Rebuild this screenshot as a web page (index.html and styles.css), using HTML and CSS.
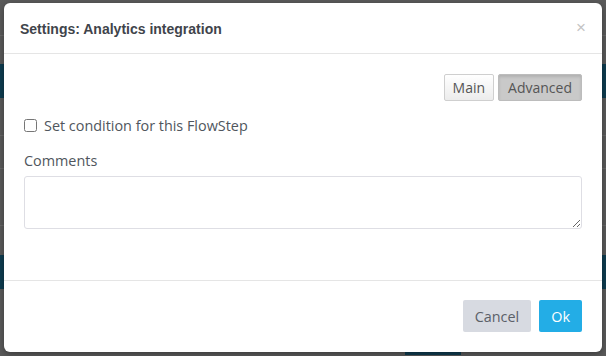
FILE: index.html
```html
<!DOCTYPE html>
<html lang="en">
<head>
	<meta charset="UTF-8">
	<title>Settings: Analytics integration</title>
	<link rel="stylesheet" href="styles.css">
</head>
<body>
	<div class="page">
		<div class="band band-top"></div>
		<div class="band band-line"></div>
		<div class="band band-a"></div>
		<div class="band band-dark"></div>
		<div class="band band-b"></div>
		<div class="band band-line"></div>
		<div class="band band-c"></div>
		<div class="band band-line"></div>
		<div class="band band-d"></div>
		<div class="band band-line"></div>
		<div class="band band-e"></div>
		<div class="band band-dark"></div>
		<div class="band band-f">
			<span class="tab-peek"></span>
		</div>
	</div>

	<div class="modal">
		<div class="modal-header">
			<h4 class="modal-title">Settings: Analytics integration</h4>
			<span class="close">&times;</span>
		</div>
		<div class="modal-body">
			<div class="switcher">
				<button class="btn-tab">Main</button>
				<button class="btn-tab active">Advanced</button>
			</div>
			<label class="check-row">
				<input type="checkbox">
				<span>Set condition for this FlowStep</span>
			</label>
			<label class="field-label" for="comments">Comments</label>
			<textarea id="comments" class="comments"></textarea>
		</div>
		<div class="modal-footer">
			<button class="btn btn-cancel">Cancel</button>
			<button class="btn btn-ok">Ok</button>
		</div>
	</div>
</body>
</html>
```
FILE: styles.css
```css
html, body {
	margin: 0;
	padding: 0;
}
body {
	width: 606px;
	height: 356px;
	overflow: hidden;
	background: #5a5a5a;
	font-family: "Open Sans", "Liberation Sans", sans-serif;
	position: relative;
}
.page {
	display: flex;
	flex-direction: column;
}
.band {
	background: #5a5a5a;
}
.band-top { height: 35px; }
.band-line { height: 1px; background: #686868; }
.band-a { height: 28px; }
.band-dark { height: 34px; background: #0f3c50; }
.band-b { height: 37px; }
.band-c { height: 32px; }
.band-d { height: 56px; }
.band-e { height: 29px; }
.band-f {
	height: 66px;
	display: flex;
	align-items: flex-end;
	padding-left: 405px;
}
.tab-peek {
	width: 56px;
	height: 4px;
	background: #0f3c50;
	border-top: 1px solid #7a8a92;
	box-sizing: border-box;
}

.modal {
	position: absolute;
	left: 4px;
	top: 3px;
	width: 598px;
	height: 349px;
	background: #fff;
	border-radius: 6px;
	box-shadow: 0 2px 6px rgba(0, 0, 0, 0.35);
	display: flex;
	flex-direction: column;
}
.modal-header {
	height: 50px;
	border-bottom: 1px solid #e5e5e5;
	display: flex;
	align-items: center;
	justify-content: space-between;
	padding: 0 16px 0 16px;
}
.modal-title {
	margin: 0;
	font-family: "Liberation Sans", Arial, sans-serif;
	font-weight: bold;
	font-size: 14px;
	color: #3f444b;
	padding-top: 2px;
}
.close {
	font-family: "Liberation Sans", Arial, sans-serif;
	font-size: 17px;
	color: #c4c4c4;
	line-height: 1;
	margin-top: -2px;
}
.modal-body {
	flex: 1;
	padding: 20px 20px 0 20px;
	display: flex;
	flex-direction: column;
}
.switcher {
	display: flex;
	justify-content: flex-end;
	gap: 4px;
}
.btn-tab {
	height: 27px;
	padding: 0 8px;
	font-family: "Open Sans", sans-serif;
	font-size: 14px;
	color: #555;
	border: 1px solid #cfcfcf;
	border-radius: 2px;
	background: linear-gradient(#ffffff, #ececec);
}
.btn-tab.active {
	padding: 0 9px;
	background: #c9c9c9;
	border-color: #bcbcbc;
	box-shadow: inset 0 2px 3px rgba(0, 0, 0, 0.12);
	color: #555;
}
.check-row {
	display: flex;
	align-items: center;
	gap: 7px;
	margin-top: 15px;
	font-size: 14.4px;
	color: #50565d;
}
.check-row input {
	margin: 0;
	width: 13px;
	height: 13px;
}
.field-label {
	margin-top: 16px;
	font-size: 14.4px;
	color: #50565d;
}
.comments {
	margin-top: 6px;
	height: 53px;
	box-sizing: border-box;
	border: 1px solid #dedee4;
	border-radius: 3px;
	resize: vertical;
}
.modal-footer {
	height: 72px;
	border-top: 1px solid #e5e5e5;
	box-sizing: border-box;
	display: flex;
	justify-content: flex-end;
	align-items: flex-start;
	gap: 8px;
	padding: 19px 20px 0 0;
}
.btn {
	height: 32px;
	border: none;
	border-radius: 2px;
	font-family: "Open Sans", sans-serif;
	font-size: 14.4px;
	padding: 0 12px;
}
.btn-cancel {
	background: #d7dae1;
	color: #5b6068;
}
.btn-ok {
	background: #23ade6;
	color: #fff;
	padding: 0 12px;
}
```
